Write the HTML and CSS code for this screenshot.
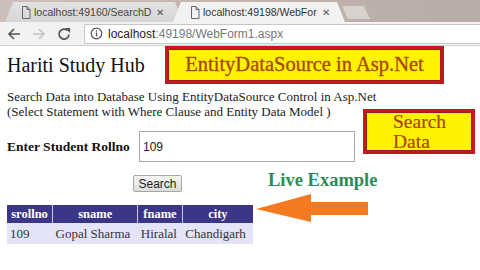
FILE: index.html
```html
<!DOCTYPE html>
<html lang="en">
<head>
  <meta charset="UTF-8">
  <title>WebForm1</title>
  <link rel="stylesheet" href="styles.css">
</head>
<body>

  <div class="tabstrip">
    <div class="tab tab-back">
      <svg class="tab-icon" width="10" height="13" viewBox="0 0 10 13"><path d="M1.5 0.5h4.5l3 3v9h-7.5z M6 0.5v3h3" fill="none" stroke="#666" stroke-width="1"/></svg>
      <span class="tab-title">localhost:49160/SearchD</span>
      <span class="tab-close">&#x2715;</span>
    </div>
    <div class="tab tab-active">
      <svg class="tab-icon" width="10" height="13" viewBox="0 0 10 13"><path d="M1.5 0.5h4.5l3 3v9h-7.5z M6 0.5v3h3" fill="none" stroke="#666" stroke-width="1"/></svg>
      <span class="tab-title">localhost:49198/WebFor</span>
      <span class="tab-close">&#x2715;</span>
    </div>
    <div class="tab-new"></div>
  </div>

  <div class="toolbar">
    <svg class="nav" width="16" height="16" viewBox="0 0 16 16"><path d="M14 8H3 M8 3L3 8l5 5" fill="none" stroke="#555" stroke-width="1.6"/></svg>
    <svg class="nav" width="16" height="16" viewBox="0 0 16 16"><path d="M2 8h11 M8 3l5 5-5 5" fill="none" stroke="#c4c4c4" stroke-width="1.6"/></svg>
    <svg class="nav" width="16" height="16" viewBox="0 0 16 16"><path d="M13 8.5A5 5 0 1 1 11.5 4.5" fill="none" stroke="#555" stroke-width="1.7"/><path d="M9 2h5v5z" fill="#555"/></svg>
    <div class="omnibox">
      <svg width="13" height="13" viewBox="0 0 13 13"><circle cx="6.5" cy="6.5" r="5.3" fill="none" stroke="#555" stroke-width="1.2"/><rect x="5.9" y="5.4" width="1.3" height="4" fill="#555"/><rect x="5.9" y="3.2" width="1.3" height="1.3" fill="#555"/></svg>
      <span class="url"><b>localhost</b>:49198/WebForm1.aspx</span>
    </div>
  </div>

  <div class="page">
    <div class="header">
      <h1>Hariti Study Hub</h1>
      <div class="banner">EntityDataSource in Asp.Net</div>
    </div>

    <p class="intro">Search Data into Database Using EntityDataSource Control in Asp.Net<br>(Select Statement with Where Clause and Entity Data Model )</p>

    <div class="callout">Search<br>Data</div>

    <div class="form-row">
      <label>Enter Student Rollno</label>
      <input type="text" value="109">
    </div>

    <div class="button-row">
      <button>Search</button>
      <span class="live">Live Example</span>
    </div>

    <div class="result-row">
      <table class="grid">
        <tr>
          <th class="c1">srollno</th>
          <th class="c2">sname</th>
          <th class="c3">fname</th>
          <th class="c4">city</th>
        </tr>
        <tr>
          <td>109</td>
          <td>Gopal Sharma</td>
          <td>Hiralal</td>
          <td>Chandigarh</td>
        </tr>
      </table>
      <svg class="arrow" width="112" height="28" viewBox="0 0 112 28"><polygon points="0,15 55,0 55,8 112,8 112,21 55,21 55,28" fill="#f47a22"/></svg>
    </div>
  </div>

</body>
</html>
```

FILE: styles.css
```css
body {
  margin: 0;
  background-color: #fff;
  font-family: 'Liberation Serif', serif;
  color: #222;
  width: 480px;
  height: 270px;
  overflow: hidden;
}

/* browser chrome */
.tabstrip {
  height: 22px;
  background: linear-gradient(to right, #cdbfbb, #c0b3ad 60%, #b9aca6);
  display: flex;
  align-items: flex-end;
}

.tab {
  height: 20px;
  display: flex;
  align-items: center;
  font-family: 'Liberation Sans', sans-serif;
  font-size: 10.5px;
  clip-path: polygon(0 100%, 8px 0, calc(100% - 8px) 0, 100% 100%);
  box-sizing: border-box;
}

.tab-back {
  margin-left: 5px;
  width: 178px;
  padding-left: 16px;
  background: linear-gradient(#e2e2e2, #d6d6d6);
  color: #444;
}

.tab-active {
  margin-left: -10px;
  width: 172px;
  padding-left: 17px;
  background-color: #f2f2f2;
  color: #333;
}

.tab-icon {
  margin-right: 3px;
  flex-shrink: 0;
}

.tab-title {
  white-space: nowrap;
}

.tab-close {
  font-size: 10px;
  color: #555;
  margin-left: 5px;
}

.tab-new {
  width: 28px;
  height: 13px;
  margin: 0 0 3px -3px;
  background-color: #d8d2ce;
  clip-path: polygon(0 0, 22px 0, 100% 100%, 6px 100%);
}

.toolbar {
  height: 23px;
  background-color: #f2f2f2;
  display: flex;
  align-items: center;
  padding-left: 6px;
  border-bottom: 1px solid #d0d0d0;
}

.nav {
  margin-right: 9px;
}

.omnibox {
  margin-left: 3px;
  flex: 1;
  height: 18px;
  background-color: #fff;
  border: 1px solid #c6c6c6;
  border-right: none;
  border-radius: 2px 0 0 2px;
  display: flex;
  align-items: center;
  padding-left: 5px;
}

.url {
  margin-left: 5px;
  font-family: 'Liberation Sans', sans-serif;
  font-size: 12px;
  color: #777;
}

.url b {
  font-weight: normal;
  color: #222;
}

/* page */
.page {
  position: relative;
  padding-left: 7px;
}

.header {
  display: flex;
  align-items: center;
  height: 38px;
}

h1 {
  margin: 0;
  font-size: 20px;
  font-weight: normal;
  color: #111;
  width: 158px;
}

.banner {
  width: 279px;
  height: 38px;
  box-sizing: border-box;
  background-color: #fff200;
  border: 3px solid #c8161d;
  box-shadow: inset 0 0 0 1px #9c1c1c;
  color: #a8460a;
  font-size: 20.5px;
  -webkit-text-stroke: 0.3px #a8460a;
  text-align: center;
  line-height: 31px;
}

.intro {
  margin: 6px 0 0;
  font-size: 13px;
  line-height: 14.5px;
  color: #222;
}

.callout {
  position: absolute;
  left: 363px;
  top: 63px;
  width: 112px;
  height: 45px;
  box-sizing: border-box;
  background-color: #fff200;
  border: 3px solid #c8161d;
  box-shadow: inset 0 0 0 1px #9c1c1c;
  color: #a8460a;
  font-size: 19.5px;
  -webkit-text-stroke: 0.2px #a8460a;
  line-height: 20px;
  padding: 0 0 0 27px;
}

.form-row {
  display: flex;
  align-items: center;
  margin-top: 12px;
}

label {
  width: 132px;
  font-weight: bold;
  font-size: 13.5px;
  color: #111;
}

input {
  width: 216px;
  height: 31px;
  box-sizing: border-box;
  border: 1px solid #a9a9a9;
  padding: 0 3px;
  font-family: 'Liberation Sans', sans-serif;
  font-size: 12px;
  color: #222;
}

.button-row {
  display: flex;
  align-items: flex-start;
  margin-top: 13px;
}

button {
  margin-left: 126px;
  width: 49px;
  height: 17px;
  padding: 0;
  border: 1px solid #a6a6a6;
  border-radius: 2px;
  background: linear-gradient(#f6f6f6, #dddddd);
  font-family: 'Liberation Sans', sans-serif;
  font-size: 12px;
  color: #222;
}

.live {
  margin: -5px 0 0 86px;
  font-size: 18.5px;
  line-height: 20px;
  font-weight: bold;
  color: #2e8b57;
}

.result-row {
  display: flex;
  align-items: flex-start;
  margin-top: 13px;
}

.grid {
  border-collapse: collapse;
  width: 246px;
}

.grid th {
  height: 18px;
  padding: 0;
  background-color: #3b3687;
  color: #fff;
  font-size: 12.5px;
  border-left: 1px solid #c9c7e6;
}

.grid th:first-child {
  border-left: none;
}

.grid td {
  height: 21px;
  padding: 0 0 0 3px;
  background-color: #e4e4f8;
  font-size: 13px;
  color: #333;
  white-space: nowrap;
}

.c1 { width: 46px; }
.c2 { width: 85px; }
.c3 { width: 44px; }
.c4 { width: 71px; }

.arrow {
  margin: -11px 0 0 3px;
}
```
